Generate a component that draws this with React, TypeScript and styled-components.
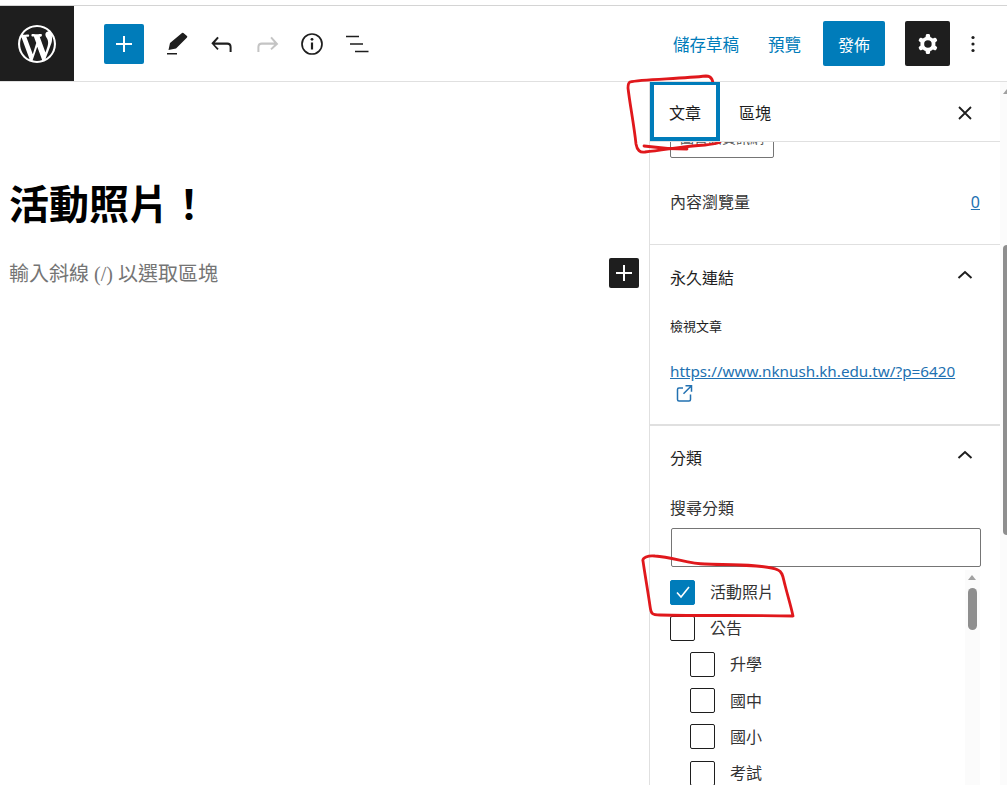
import React from 'react';
import styled, { createGlobalStyle } from 'styled-components';

const colors = {
  dark: '#1e1e1e',
  blue: '#007cba',
  link: '#2271b1',
  line: '#e0e0e0',
  red: '#e0181c',
};

const GlobalStyle = createGlobalStyle`
  html, body {
    margin: 0;
    padding: 0;
    height: 100%;
    overflow: hidden;
    background: #fff;
  }
  body {
    font-family: "Noto Sans", "Noto Sans CJK TC", sans-serif;
    color: ${colors.dark};
  }
`;

const Page = styled.div`
  position: relative;
  width: 1007px;
  height: 785px;
  overflow: hidden;
  display: flex;
  flex-direction: column;
`;

const TopGap = styled.div`
  height: 5px;
  flex: none;
  border-bottom: 1px solid #d4d4d4;
`;

const Header = styled.header`
  flex: none;
  height: 75px;
  display: flex;
  align-items: center;
  border-bottom: 1px solid ${colors.line};
`;

const LogoBox = styled.div`
  width: 74px;
  height: 75px;
  background: ${colors.dark};
  display: flex;
  align-items: center;
  justify-content: center;
`;

const Tools = styled.div`
  display: flex;
  align-items: center;
  margin-left: 30px;
`;

const InsertButton = styled.div`
  width: 40px;
  height: 40px;
  border-radius: 2px;
  background: ${colors.blue};
  display: flex;
  align-items: center;
  justify-content: center;
  margin-right: 13px;
`;

const ToolIcon = styled.div<{ $gap?: number }>`
  width: 40px;
  height: 40px;
  margin-right: ${p => p.$gap ?? 5}px;
  display: flex;
  align-items: center;
  justify-content: center;
`;

const HeaderRight = styled.div`
  margin-left: auto;
  display: flex;
  align-items: center;
`;

const TextAction = styled.span<{ $gap: number }>`
  font-size: 16.5px;
  color: ${colors.blue};
  margin-right: ${p => p.$gap}px;
`;

const PublishButton = styled.div`
  width: 62px;
  height: 45px;
  border-radius: 2px;
  background: ${colors.blue};
  color: #fff;
  font-size: 16px;
  display: flex;
  align-items: center;
  justify-content: center;
  margin-right: 20px;
`;

const SettingsButton = styled.div`
  width: 45px;
  height: 45px;
  border-radius: 2px;
  background: ${colors.dark};
  display: flex;
  align-items: center;
  justify-content: center;
`;

const MoreButton = styled.div`
  width: 24px;
  height: 45px;
  margin: 0 22px 0 11px;
  display: flex;
  align-items: center;
  justify-content: center;
`;

const Body = styled.div`
  flex: 1;
  min-height: 0;
  display: flex;
`;

const Editor = styled.main`
  flex: 1;
  min-width: 0;
  padding: 95px 10px 0 9px;
`;

const PostTitle = styled.h1`
  margin: 0;
  font-size: 40px;
  line-height: 54px;
  font-weight: 700;
  color: #000;
`;

const BlockRow = styled.div`
  display: flex;
  align-items: center;
  justify-content: space-between;
  margin-top: 27px;
`;

const Placeholder = styled.p`
  margin: 0;
  font-size: 20px;
  line-height: 32px;
  color: #757575;
  font-family: "Liberation Serif", "Noto Sans CJK TC", serif;
`;

const BlockAdd = styled.div`
  width: 30px;
  height: 30px;
  margin-top: -2px;
  border-radius: 2px;
  background: ${colors.dark};
  display: flex;
  align-items: center;
  justify-content: center;
`;

const Sidebar = styled.aside`
  flex: none;
  width: 358px;
  box-sizing: border-box;
  display: flex;
  border-left: 1px solid ${colors.line};
`;

const SidebarMain = styled.div`
  flex: 1;
  min-width: 0;
  display: flex;
  flex-direction: column;
`;

const TabBar = styled.div`
  flex: none;
  height: 59px;
  display: flex;
  align-items: center;
  border-bottom: 1px solid ${colors.line};
  background: #fff;
  position: relative;
  z-index: 1;
`;

const Tab = styled.div<{ $active?: boolean }>`
  width: 70px;
  height: 59px;
  box-sizing: border-box;
  display: flex;
  align-items: center;
  justify-content: center;
  font-size: 16px;
  font-weight: 400;
  color: ${colors.dark};
  border: ${p => (p.$active ? `4px solid ${colors.blue}` : 'none')};
  border-top-width: ${p => (p.$active ? 3 : 0)}px;
  padding-top: 1px;
`;

const CloseButton = styled.div`
  margin-left: auto;
  margin-right: 23px;
  display: flex;
  padding-top: 2px;
`;

const PanelScroll = styled.div`
  flex: 1;
  min-height: 0;
  overflow: hidden;
`;

const CutButton = styled.div`
  width: 104px;
  height: 36px;
  margin: -20px 0 0 20px;
  box-sizing: border-box;
  border: 1px solid #757575;
  border-radius: 2px;
  font-size: 14px;
  text-align: center;
  line-height: 30px;
  color: #555;
  white-space: nowrap;
  overflow: hidden;
`;

const ViewsRow = styled.div`
  display: flex;
  justify-content: space-between;
  align-items: center;
  padding: 32px 20px 30px;
  font-size: 16px;
  line-height: 24px;
  color: #333;
  border-bottom: 1px solid ${colors.line};
`;

const ZeroLink = styled.span`
  color: ${colors.link};
  text-decoration: underline;
  font-size: 16px;
`;

const Section = styled.section<{ $top: number }>`
  padding: ${p => p.$top}px 20px 0;
`;

const SectionHead = styled.div`
  display: flex;
  justify-content: space-between;
  align-items: center;
  height: 26px;
  font-size: 16px;
  font-weight: 400;
  color: ${colors.dark};
`;

const ChevronBox = styled.div`
  display: flex;
  margin: -4px 3px 0 0;
`;

const SmallLabel = styled.div`
  margin-top: 27px;
  font-size: 13px;
  line-height: 18px;
  color: ${colors.dark};
`;

const PermaLink = styled.a`
  display: block;
  margin-top: 25px;
  font-size: 15.25px;
  line-height: 23px;
  color: ${colors.link};
  text-decoration: underline;
  padding-bottom: 19px;
`;

const ExternalIcon = styled.svg`
  display: block;
  margin-top: -2px;
  margin-left: 2px;
`;

const Divider = styled.div`
  height: 2px;
  background: ${colors.line};
`;

const SearchLabel = styled.div`
  margin-top: 26px;
  font-size: 16px;
  line-height: 24px;
  color: #333;
`;

const SearchInput = styled.div`
  height: 39px;
  margin: 8px -1px 0 1px;
  box-sizing: border-box;
  border: 1px solid #757575;
  border-radius: 2px;
`;

const TermList = styled.div`
  position: relative;
  margin: 7px 0 0;
  display: flex;
  flex-direction: column;
`;

const TermRow = styled.div<{ $child?: boolean }>`
  display: flex;
  align-items: center;
  height: 36.2px;
  padding-left: ${p => (p.$child ? 20 : 0)}px;
`;

const Box = styled.div<{ $checked?: boolean }>`
  width: 25px;
  height: 25px;
  flex: none;
  box-sizing: border-box;
  border-radius: 2px;
  border: 1px solid ${p => (p.$checked ? colors.blue : colors.dark)};
  background: ${p => (p.$checked ? colors.blue : '#fff')};
  display: flex;
  align-items: center;
  justify-content: center;
`;

const TermLabel = styled.span`
  margin: -2px 0 0 15px;
  font-size: 16px;
  color: #333;
`;

const ListScrollbar = styled.div`
  position: absolute;
  top: -4px;
  right: 0;
  width: 15px;
  height: 230px;
  background: #fbfbfb;
`;

const ListThumb = styled.div`
  position: absolute;
  top: 18px;
  left: 3px;
  width: 9px;
  height: 42px;
  border-radius: 5px;
  background: #8e8e8e;
`;

const ArrowUp = styled.div<{ $top: number; $left: number }>`
  position: absolute;
  top: ${p => p.$top}px;
  left: ${p => p.$left}px;
  width: 0;
  height: 0;
  border-left: 4.5px solid transparent;
  border-right: 4.5px solid transparent;
  border-bottom: 5px solid #a0a0a0;
`;

const PageScrollbar = styled.div`
  flex: none;
  width: 7px;
  position: relative;
  overflow: hidden;
  background: #fbfbfb;
`;

const PageThumb = styled.div`
  position: absolute;
  top: 163px;
  left: 3px;
  width: 4px;
  height: 290px;
  border-radius: 4px 0 0 4px;
  background: #8e8e8e;
`;

const Annotation = styled.svg`
  position: absolute;
  inset: 0;
  pointer-events: none;
`;

const Plus = ({ size, sw = 2 }: { size: number; sw?: number }) => (
  <svg width={size} height={size} viewBox="0 0 24 24">
    <path d="M12 4v16M4 12h16" stroke="#fff" strokeWidth={sw} fill="none" />
  </svg>
);

const Chevron = () => (
  <svg width="24" height="24" viewBox="0 0 24 24">
    <path d="M5.500 15 12 9l6.500 6" stroke={colors.dark} strokeWidth="2" fill="none" />
  </svg>
);

const terms = [
  { name: '公告' },
  { name: '升學', child: true },
  { name: '國中', child: true },
  { name: '國小', child: true },
  { name: '考試', child: true },
];

export default function App() {
  return (
    <Page>
      <GlobalStyle />
      <TopGap />
      <Header>
        <LogoBox>
          <svg width="38" height="38" viewBox="0 0 20 20" fill="#fff">
            <path d="M20 10c0-5.510-4.490-10-10-10C4.480 0 0 4.490 0 10c0 5.520 4.480 10 10 10 5.510 0 10-4.480 10-10zM7.780 15.370L4.370 6.220c.550-.020 1.170-.080 1.170-.080.500-.060.440-1.130-.060-1.110 0 0-1.450.110-2.370.110-.180 0-.370 0-.580-.010C4.120 2.690 6.890 1.050 10 1.050c2.330 0 4.450.870 6.050 2.340-.680-.110-1.650.390-1.650 1.580 0 .740.450 1.360.900 2.100.350.610.550 1.360.550 2.460 0 1.490-1.400 5-1.400 5l-3.030-8.370c.540-.020.820-.170.820-.170.500-.050.440-1.250-.060-1.220 0 0-1.440.120-2.380.120-.870 0-2.330-.120-2.330-.120-.500-.030-.560 1.200-.060 1.220l.920.080 1.260 3.410zM17.410 10c.240-.640.740-1.870.430-4.250.700 1.290 1.050 2.710 1.050 4.250 0 3.290-1.730 6.240-4.400 7.780.970-2.590 1.940-5.200 2.920-7.780zM6.100 18.090C3.120 16.650 1.110 13.530 1.110 10c0-1.300.230-2.480.720-3.590C3.250 10.300 4.670 14.200 6.100 18.090zm4.030-6.630l2.580 6.980c-.860.290-1.760.450-2.710.450-.790 0-1.570-.110-2.290-.330.810-2.380 1.620-4.740 2.420-7.100z" />
          </svg>
        </LogoBox>
        <Tools>
          <InsertButton>
            <Plus size={24} />
          </InsertButton>
          <ToolIcon $gap={5}>
            <svg width="24" height="24" viewBox="0 0 24 24" fill={colors.dark}>
              <path d="M3.500 18 5 11 17 1a1 1 0 0 1 1.400 0L22 4a1 1 0 0 1 0 1.400L11 16.500zM2 21h10v1.500H2z" />
            </svg>
          </ToolIcon>
          <ToolIcon $gap={5}>
            <svg width="32" height="32" viewBox="0 0 24 24" fill={colors.dark}>
              <path d="M18.300 11.700c-.600-.600-1.400-.900-2.300-.900H6.700l2.900-3.300-1.100-1-4.500 5L8.500 16.500l1-1-3-3h9.500c.500 0 .900.200 1.200.500.300.300.500.700.500 1.200v3.800h1.500v-3.800c0-.900-.300-1.700-.900-2.500z" />
            </svg>
          </ToolIcon>
          <ToolIcon $gap={5}>
            <svg width="32" height="32" viewBox="0 0 24 24" fill="#c4c4c4">
              <path d="M15.600 6.500l-1.100 1 2.900 3.300H8c-.900 0-1.700.300-2.300.900-.600.800-.900 1.600-.900 2.500v3.800h1.500v-3.800c0-.500.200-.900.500-1.200.300-.300.700-.500 1.200-.500h9.500l-3 3 1 1 5-4.500z" />
            </svg>
          </ToolIcon>
          <ToolIcon $gap={5}>
            <svg width="24" height="24" viewBox="0 0 24 24" fill="none">
              <circle cx="12" cy="12" r="10" stroke={colors.dark} strokeWidth="1.700" />
              <path d="M12 10.500v7" stroke={colors.dark} strokeWidth="2.200" />
              <circle cx="12" cy="7.300" r="1.400" fill={colors.dark} />
            </svg>
          </ToolIcon>
          <ToolIcon $gap={0}>
            <svg width="24" height="24" viewBox="0 0 24 24" fill="none" stroke={colors.dark} strokeWidth="1.600">
              <path d="M1 4.500h13M5 12h13M10 19.500h13.500" />
            </svg>
          </ToolIcon>
        </Tools>
        <HeaderRight>
          <TextAction $gap={29}>儲存草稿</TextAction>
          <TextAction $gap={22}>預覽</TextAction>
          <PublishButton>發佈</PublishButton>
          <SettingsButton>
            <svg width="30" height="30" viewBox="0 0 24 24" fill="#fff">
              <path
                fillRule="evenodd"
                clipRule="evenodd"
                d="M10.289 4.836A1 1 0 0111.275 4h1.306a1 1 0 01.987.836l.244 1.466c.787.26 1.503.679 2.108 1.218l1.393-.522a1 1 0 011.216.437l.653 1.13a1 1 0 01-.23 1.273l-1.148.944a6.025 6.025 0 010 2.435l1.149.946a1 1 0 01.23 1.272l-.653 1.13a1 1 0 01-1.216.437l-1.394-.522c-.605.54-1.32.958-2.108 1.218l-.244 1.466a1 1 0 01-.987.836h-1.306a1 1 0 01-.986-.836l-.244-1.466a5.995 5.995 0 01-2.108-1.218l-1.394.522a1 1 0 01-1.217-.436l-.653-1.131a1 1 0 01.23-1.272l1.149-.946a6.026 6.026 0 010-2.435l-1.148-.944a1 1 0 01-.23-1.272l.653-1.131a1 1 0 011.217-.437l1.393.522a5.994 5.994 0 012.108-1.218l.244-1.466zM14.929 12a3 3 0 11-6 0 3 3 0 016 0z"
              />
            </svg>
          </SettingsButton>
          <MoreButton>
            <svg width="24" height="24" viewBox="0 0 24 24" fill={colors.dark}>
              <circle cx="12" cy="5.500" r="1.600" />
              <circle cx="12" cy="12" r="1.600" />
              <circle cx="12" cy="18.500" r="1.600" />
            </svg>
          </MoreButton>
        </HeaderRight>
      </Header>
      <Body>
        <Editor>
          <PostTitle>活動照片！</PostTitle>
          <BlockRow>
            <Placeholder>輸入斜線 (/) 以選取區塊</Placeholder>
            <BlockAdd>
              <Plus size={24} />
            </BlockAdd>
          </BlockRow>
        </Editor>
        <Sidebar>
          <SidebarMain>
            <TabBar>
              <Tab $active>文章</Tab>
              <Tab>區塊</Tab>
              <CloseButton>
                <svg width="24" height="24" viewBox="0 0 24 24">
                  <path d="M6 6l12 12M18 6 6 18" stroke={colors.dark} strokeWidth="1.800" fill="none" />
                </svg>
              </CloseButton>
            </TabBar>
            <PanelScroll>
              <CutButton>圖書館資訊網</CutButton>
              <ViewsRow>
                <span>內容瀏覽量</span>
                <ZeroLink>0</ZeroLink>
              </ViewsRow>
              <Section $top={19}>
                <SectionHead>
                  永久連結
                  <ChevronBox>
                    <Chevron />
                  </ChevronBox>
                </SectionHead>
                <SmallLabel>檢視文章</SmallLabel>
                <PermaLink>
                  https://www.nknush.kh.edu.tw/?p=6420
                  <ExternalIcon width="24" height="24" viewBox="0 0 24 24" fill="none" stroke={colors.link} strokeWidth="1.500">
                    <path d="M18.500 13.500v5a1.500 1.500 0 0 1-1.500 1.500H7a1.500 1.500 0 0 1-1.500-1.500V8.500A1.500 1.500 0 0 1 7 7h4" />
                    <path d="M13.500 4.800h6v6M19.500 4.800l-8 8" />
                  </ExternalIcon>
                </PermaLink>
              </Section>
              <Divider />
              <Section $top={18}>
                <SectionHead>
                  分類
                  <ChevronBox>
                    <Chevron />
                  </ChevronBox>
                </SectionHead>
                <SearchLabel>搜尋分類</SearchLabel>
                <SearchInput />
                <TermList>
                  <TermRow>
                    <Box $checked>
                      <svg width="20" height="20" viewBox="0 0 20 20">
                        <path d="M4 10.500 8 15l8-10" stroke="#fff" strokeWidth="1.600" fill="none" />
                      </svg>
                    </Box>
                    <TermLabel>活動照片</TermLabel>
                  </TermRow>
                  {terms.map(t => (
                    <TermRow key={t.name} $child={t.child}>
                      <Box />
                      <TermLabel>{t.name}</TermLabel>
                    </TermRow>
                  ))}
                  <ListScrollbar>
                    <ArrowUp $top={5} $left={3} />
                    <ListThumb />
                  </ListScrollbar>
                </TermList>
              </Section>
            </PanelScroll>
          </SidebarMain>
          <PageScrollbar>
            <ArrowUp $top={7} $left={3} />
            <PageThumb />
          </PageScrollbar>
        </Sidebar>
      </Body>
      <Annotation width="1007" height="785" viewBox="0 0 1007 785" fill="none" stroke={colors.red} strokeWidth="2.800" strokeLinecap="round" strokeLinejoin="round">
        <path d="M630 82C640 79 680 79 706 76C712 76 713 80 714 90C715 105 720 125 722 138C722 143 716 144 705 145C685 146 665 150 645 152C640 153 637 150 636 144C634 125 630 105 628 88C628 85 628 83 630 82z" />
        <path d="M644 146c14 2 30 3 43 3" />
        <path d="M643 561C642 558 648 555 655 556C672 557 690 564 705 564C725 565 765 564 778 570C783 572 783 578 785 585C788 597 791 606 793 616C750 615 700 616 660 615C652 615 651 614 650 606C648 592 645 575 643 561z" />
      </Annotation>
    </Page>
  );
}
